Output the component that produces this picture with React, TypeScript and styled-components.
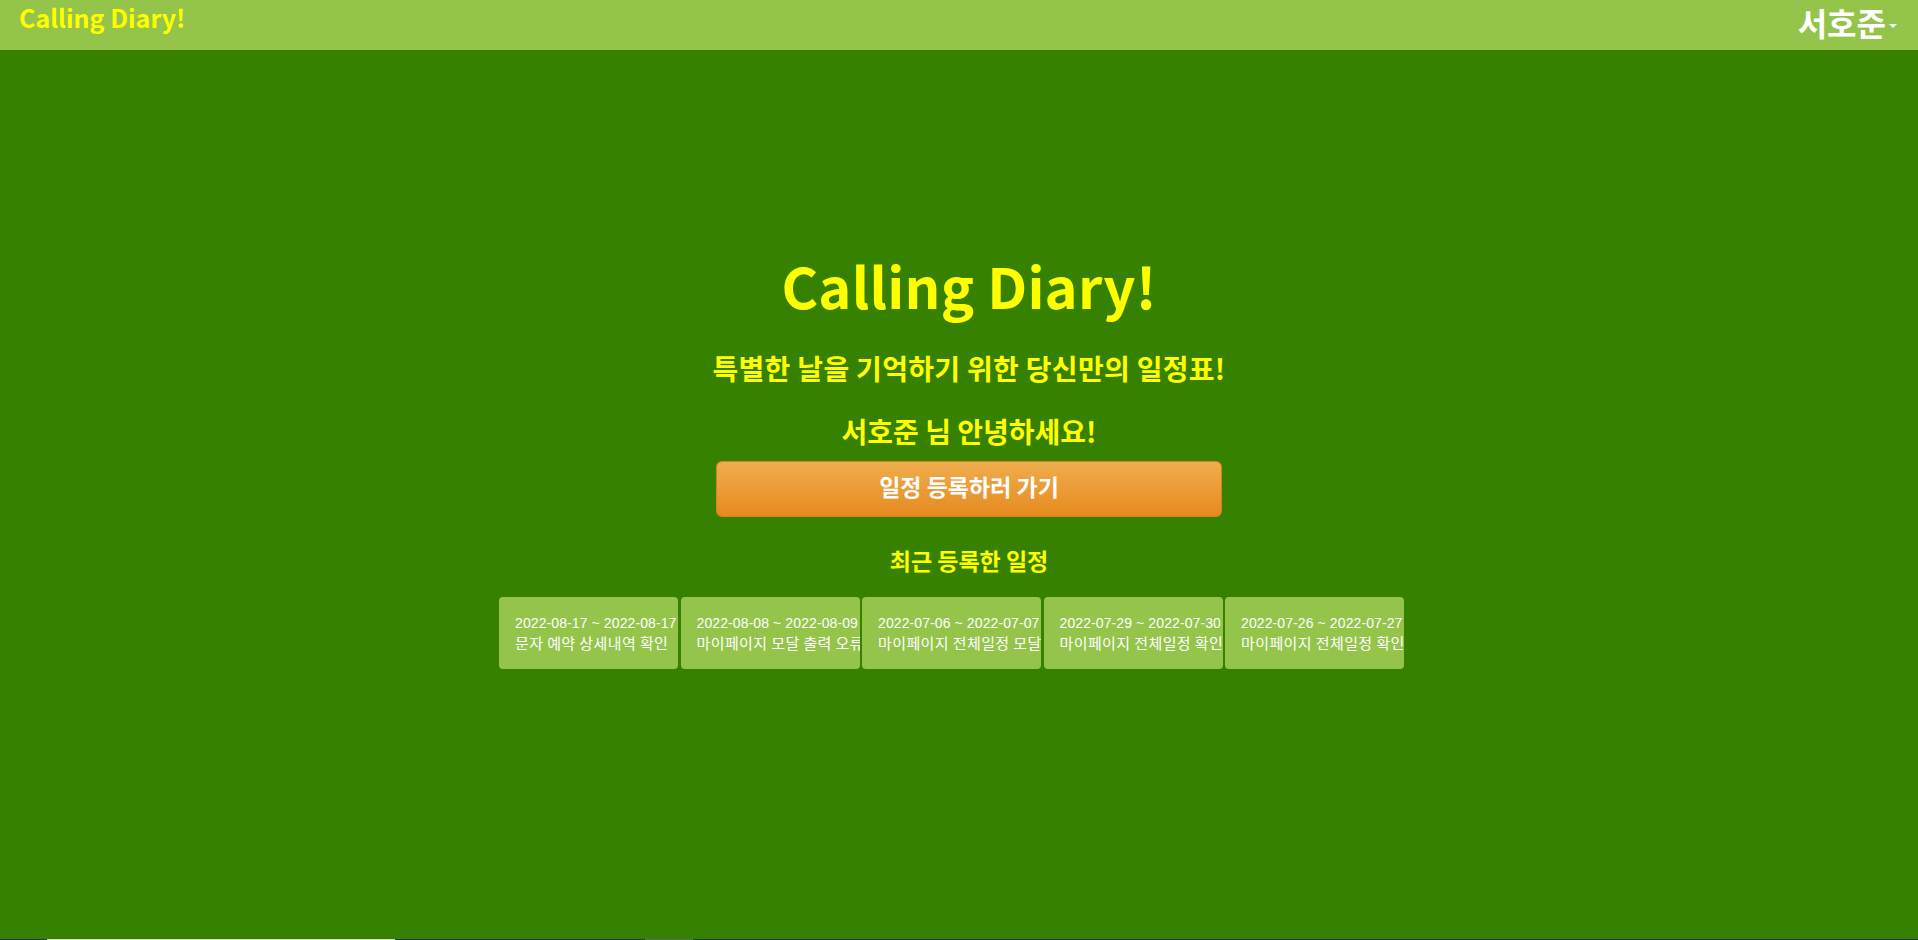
import styled, { createGlobalStyle } from 'styled-components'

const schedules = [
	{ date: '2022-08-17 ~ 2022-08-17', title: '문자 예약 상세내역 확인' },
	{ date: '2022-08-08 ~ 2022-08-09', title: '마이페이지 모달 출력 오류' },
	{ date: '2022-07-06 ~ 2022-07-07', title: '마이페이지 전체일정 모달' },
	{ date: '2022-07-29 ~ 2022-07-30', title: '마이페이지 전체일정 확인' },
	{ date: '2022-07-26 ~ 2022-07-27', title: '마이페이지 전체일정 확인' },
]

const App = () => {
	return (
		<Page>
			<GlobalStyle />
			<Header>
				<Logo>Calling Diary!</Logo>
				<UserMenu>
					서호준
					<Caret />
				</UserMenu>
			</Header>
			<Main>
				<Title>Calling Diary!</Title>
				<Subtitle>특별한 날을 기억하기 위한 당신만의 일정표!</Subtitle>
				<Greeting>서호준 님 안녕하세요!</Greeting>
				<RegisterButton type="button">일정 등록하러 가기</RegisterButton>
				<RecentTitle>최근 등록한 일정</RecentTitle>
				<CardRow>
					{schedules.map((item) => (
						<Card key={item.date}>
							<CardDate>{item.date}</CardDate>
							<CardTitle>{item.title}</CardTitle>
						</Card>
					))}
				</CardRow>
			</Main>
			<BottomStrip>
				<StripPart $width="47px" $color="#1d3a4a" />
				<StripPart $width="348px" $color="#d8d8d8" />
				<StripPart $width="250px" $color="#1d3a4a" />
				<StripPart $width="48px" $color="#5c6670" />
				<StripPart $width="1225px" $color="#1d3a4a" />
			</BottomStrip>
		</Page>
	)
}

export default App

const GlobalStyle = createGlobalStyle`
	html, body {
		margin: 0;
		padding: 0;
	}
	body {
		font-family: "Noto Sans CJK KR", "Liberation Sans", sans-serif;
		overflow: hidden;
	}
`

const Page = styled.div`
	display: flex;
	flex-direction: column;
	width: 1918px;
	height: 940px;
	background: #378100;
`

const Header = styled.header`
	display: flex;
	align-items: flex-start;
	justify-content: space-between;
	height: 50px;
	padding: 0 21px 0 19px;
	background: #94c44a;
	box-sizing: border-box;
`

const Logo = styled.a`
	font-family: "Noto Sans CJK KR", sans-serif;
	font-size: 25px;
	font-weight: 700;
	line-height: 34px;
	color: #ffff00;
`

const UserMenu = styled.div`
	display: flex;
	align-items: center;
	gap: 3px;
	font-size: 32px;
	font-weight: 700;
	line-height: 44px;
	color: #ffffff;
`

const Caret = styled.span`
	width: 0;
	height: 0;
	margin-top: 8px;
	border-top: 4px solid #ffffff;
	border-left: 4px solid transparent;
	border-right: 4px solid transparent;
`

const Main = styled.main`
	flex: 1;
	display: flex;
	flex-direction: column;
	align-items: center;
	padding: 207px 0 0 20px;
`

const Title = styled.h1`
	margin: 0;
	font-size: 56px;
	font-weight: 700;
	letter-spacing: 0.2px;
	line-height: 56px;
	color: #ffff00;
`

const Subtitle = styled.h2`
	margin: 37px 0 0;
	font-size: 28px;
	font-weight: 700;
	letter-spacing: 0.3px;
	line-height: 36px;
	color: #ffff00;
`

const Greeting = styled.h2`
	margin: 27px 0 0;
	font-size: 28px;
	font-weight: 700;
	line-height: 36px;
	color: #ffff00;
`

const RegisterButton = styled.button`
	width: 506px;
	height: 56px;
	margin-top: 12px;
	padding: 0 0 6px;
	border: 1px solid #d58512;
	border-radius: 6px;
	background: linear-gradient(to bottom, #f0ad4e, #e68a1f);
	font-family: "Noto Sans CJK KR", sans-serif;
	font-size: 23px;
	font-weight: 700;
	color: #ffffff;
`

const RecentTitle = styled.h3`
	margin: 28px 0 0;
	font-size: 23px;
	font-weight: 700;
	line-height: 30px;
	color: #ffff00;
`

const CardRow = styled.div`
	display: flex;
	gap: 2.5px;
	margin: 22px 35px 0 0;
`

const Card = styled.div`
	width: 179px;
	height: 72px;
	padding: 16px 0 16px 16px;
	border-radius: 4px;
	background: #94c44a;
	box-sizing: border-box;
	overflow: hidden;
`

const CardDate = styled.div`
	font-family: "Liberation Sans", sans-serif;
	font-size: 14px;
	letter-spacing: 0.1px;
	line-height: 20px;
	color: #ffffff;
	white-space: nowrap;
`

const CardTitle = styled.div`
	font-family: "Noto Sans CJK KR", sans-serif;
	font-size: 15px;
	letter-spacing: 0.4px;
	line-height: 20px;
	color: #ffffff;
	white-space: nowrap;
`

const BottomStrip = styled.div`
	display: flex;
	height: 1px;
`

const StripPart = styled.div<{ $width: string; $color: string }>`
	width: ${(props) => props.$width};
	background: ${(props) => props.$color};
`
